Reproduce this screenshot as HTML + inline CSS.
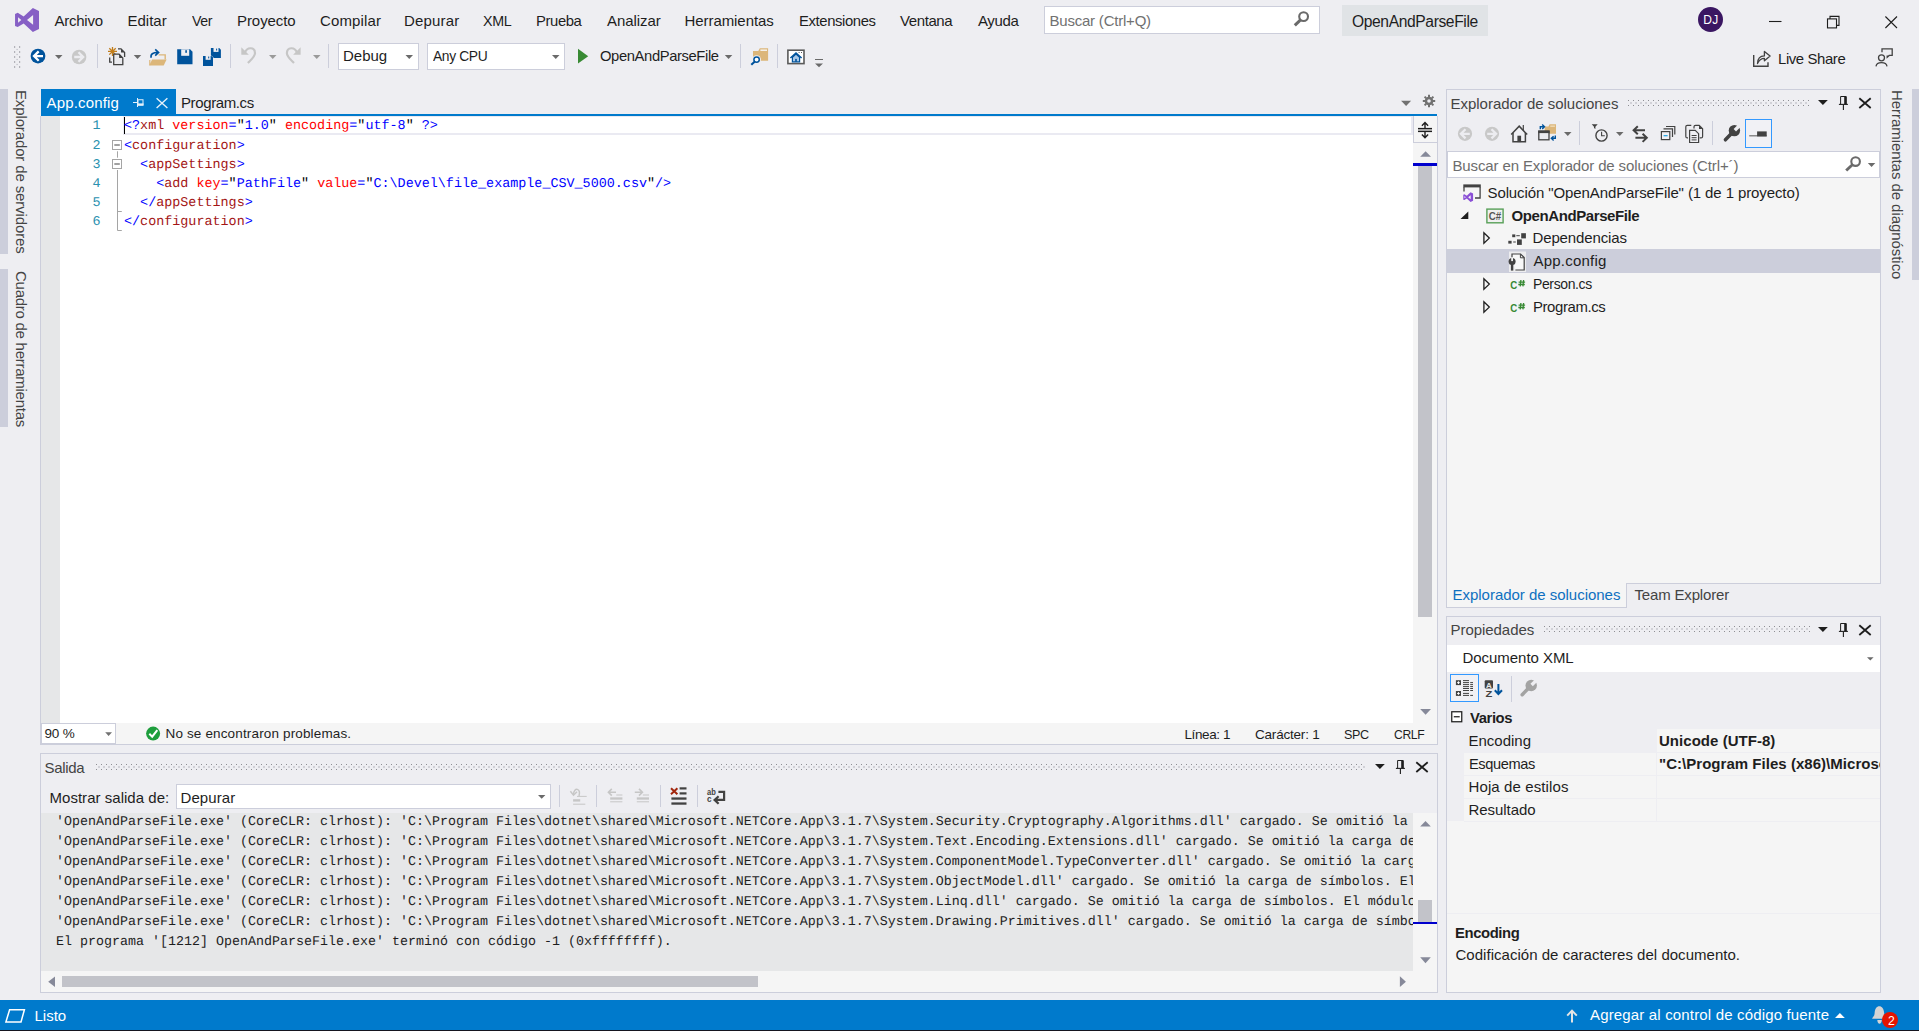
<!DOCTYPE html>
<html lang="es"><head><meta charset="utf-8"><title>OpenAndParseFile - Microsoft Visual Studio</title>
<style>
html,body{margin:0;padding:0}
body{width:1919px;height:1031px;overflow:hidden;background:#EEEEF2;position:relative;font-family:"Liberation Sans", sans-serif;color:#1E1E1E}
body div,body svg.ic{position:absolute}
.t{white-space:pre;font-family:"Liberation Sans", sans-serif}
.code{white-space:pre;font-family:"Liberation Mono", monospace;line-height:20px;text-rendering:geometricPrecision}
.ic svg{display:block;overflow:visible}
.grip{height:6px;background-image:
 radial-gradient(circle at 0.5px 0.5px,#8E8E93 0.55px,transparent 0.9px),
 radial-gradient(circle at 3px 3px,#BDBDC4 0.55px,transparent 0.9px),
 radial-gradient(circle at 0.5px 5.5px,#8E8E93 0.55px,transparent 0.9px);
 background-size:5px 6px;background-repeat:repeat-x}
</style></head>
<body>
<div class="t" style="font-size:15px;letter-spacing:-0.250px;color:#1E1E1E;line-height:20px;left:54.50px;top:10.80px;">Archivo</div>
<div class="t" style="font-size:15px;letter-spacing:0.000px;color:#1E1E1E;line-height:20px;left:127.50px;top:10.80px;">Editar</div>
<div class="t" style="font-size:15px;letter-spacing:-0.400px;color:#1E1E1E;line-height:20px;transform-origin:0 0;transform:scaleX(0.9459);left:192.00px;top:10.80px;">Ver</div>
<div class="t" style="font-size:15px;letter-spacing:-0.071px;color:#1E1E1E;line-height:20px;left:237.00px;top:10.80px;">Proyecto</div>
<div class="t" style="font-size:15px;letter-spacing:0.143px;color:#1E1E1E;line-height:20px;left:320.00px;top:10.80px;">Compilar</div>
<div class="t" style="font-size:15px;letter-spacing:0.167px;color:#1E1E1E;line-height:20px;left:404.00px;top:10.80px;">Depurar</div>
<div class="t" style="font-size:15px;letter-spacing:-0.400px;color:#1E1E1E;line-height:20px;transform-origin:0 0;transform:scaleX(0.9520);left:483.00px;top:10.80px;">XML</div>
<div class="t" style="font-size:15px;letter-spacing:-0.400px;color:#1E1E1E;line-height:20px;transform-origin:0 0;transform:scaleX(0.9891);left:536.00px;top:10.80px;">Prueba</div>
<div class="t" style="font-size:15px;letter-spacing:-0.071px;color:#1E1E1E;line-height:20px;left:607.00px;top:10.80px;">Analizar</div>
<div class="t" style="font-size:15px;letter-spacing:-0.068px;color:#1E1E1E;line-height:20px;left:684.50px;top:10.80px;">Herramientas</div>
<div class="t" style="font-size:15px;letter-spacing:-0.400px;color:#1E1E1E;line-height:20px;transform-origin:0 0;transform:scaleX(0.9903);left:798.50px;top:10.80px;">Extensiones</div>
<div class="t" style="font-size:15px;letter-spacing:-0.400px;color:#1E1E1E;line-height:20px;left:900.00px;top:10.80px;">Ventana</div>
<div class="t" style="font-size:15px;letter-spacing:-0.375px;color:#1E1E1E;line-height:20px;left:978.00px;top:10.80px;">Ayuda</div>
<div style="left:1044px;top:6px;width:276px;height:28px;background:#fff;border:1px solid #CCCEDB;box-sizing:border-box;"></div>
<div class="t" style="font-size:15px;letter-spacing:-0.214px;color:#717171;line-height:20px;left:1049.50px;top:10.80px;">Buscar (Ctrl+Q)</div>
<div style="left:1342px;top:5px;width:146px;height:31px;background:#E0E3E6;"></div>
<div class="t" style="font-size:16px;letter-spacing:-0.400px;color:#1E1E1E;line-height:20px;transform-origin:0 0;transform:scaleX(0.9767);left:1352.00px;top:11.76px;">OpenAndParseFile</div>
<div style="left:1698.2px;top:7.2px;width:25px;height:25px;background:#3A1662;border-radius:50%;"></div>
<div class="t" style="font-size:12px;letter-spacing:0.400px;color:#fff;line-height:20px;left:1703.30px;top:10.04px;">DJ</div>
<div style="left:97px;top:44px;width:1px;height:24px;background:#CCCEDB;"></div>
<div style="left:230px;top:44px;width:1px;height:24px;background:#CCCEDB;"></div>
<div style="left:328px;top:44px;width:1px;height:24px;background:#CCCEDB;"></div>
<div style="left:338px;top:43px;width:81px;height:27px;background:#fff;border:1px solid #CCCEDB;box-sizing:border-box;"></div>
<div class="t" style="font-size:15px;letter-spacing:0.000px;color:#1E1E1E;line-height:20px;left:343.00px;top:46.30px;">Debug</div>
<div style="left:427px;top:43px;width:138px;height:27px;background:#fff;border:1px solid #CCCEDB;box-sizing:border-box;"></div>
<div class="t" style="font-size:15px;letter-spacing:-0.400px;color:#1E1E1E;line-height:20px;transform-origin:0 0;transform:scaleX(0.9215);left:433.00px;top:46.30px;">Any CPU</div>
<div class="t" style="font-size:15px;letter-spacing:-0.400px;color:#1E1E1E;line-height:20px;transform-origin:0 0;transform:scaleX(0.9855);left:599.50px;top:46.30px;">OpenAndParseFile</div>
<div style="left:740px;top:44px;width:1px;height:24px;background:#CCCEDB;"></div>
<div style="left:777px;top:44px;width:1px;height:24px;background:#CCCEDB;"></div>
<div class="t" style="font-size:15px;letter-spacing:-0.400px;color:#1E1E1E;line-height:20px;transform-origin:0 0;transform:scaleX(0.9940);left:1777.70px;top:48.80px;">Live Share</div>
<div style="left:0px;top:89px;width:8px;height:165px;background:#CCCEDB;"></div>
<div style="left:0px;top:269px;width:8px;height:158px;background:#CCCEDB;"></div>
<div class="t" style="font-size:15px;letter-spacing:-0.130px;color:#444;line-height:20px;left:30.80px;top:89.50px;transform-origin:0 0;transform:rotate(90deg);">Explorador de servidores</div>
<div class="t" style="font-size:15px;letter-spacing:-0.262px;color:#444;line-height:20px;left:30.80px;top:270.50px;transform-origin:0 0;transform:rotate(90deg);">Cuadro de herramientas</div>
<div style="left:1912px;top:89px;width:7px;height:191px;background:#CCCEDB;"></div>
<div class="t" style="font-size:15px;letter-spacing:-0.058px;color:#444;line-height:20px;left:1906.80px;top:90.00px;transform-origin:0 0;transform:rotate(90deg);">Herramientas de diagnóstico</div>
<div style="left:41px;top:89px;width:135px;height:25px;background:#007ACC;"></div>
<div style="left:41px;top:114px;width:1396px;height:2px;background:#007ACC;"></div>
<div class="t" style="font-size:15px;letter-spacing:0.167px;color:#fff;line-height:20px;left:46.50px;top:92.50px;">App.config</div>
<div class="t" style="font-size:15px;letter-spacing:-0.389px;color:#1E1E1E;line-height:20px;left:181.00px;top:92.50px;">Program.cs</div>
<div style="left:40px;top:116px;width:1px;height:629px;background:#CCCEDB;"></div>
<div style="left:41px;top:116px;width:1372px;height:607px;background:#fff;"></div>
<div style="left:41px;top:116px;width:19px;height:607px;background:#E6E7E8;"></div>
<div style="left:1413px;top:116px;width:24px;height:607px;background:#F5F5F5;"></div>
<div style="left:1437px;top:116px;width:1px;height:629px;background:#CCCEDB;"></div>
<div style="left:123px;top:116px;width:1290px;height:18.5px;border:2px solid #EAEAF2;border-top-width:1.5px;box-sizing:border-box;"></div>
<div style="left:124px;top:117px;width:1px;height:17px;background:#000;"></div>
<div style="left:1413px;top:116px;width:24px;height:27px;background:#F5F5F5;border-left:1px solid #CCCEDB;border-bottom:1px solid #CCCEDB;box-sizing:border-box;"></div>
<div style="left:1413px;top:163px;width:24px;height:3px;background:#0000CD;"></div>
<div style="left:1418px;top:166px;width:14px;height:451px;background:#C2C3C9;"></div>
<svg class="ic" style="left:110px;top:138px" width="14" height="96" viewBox="0 0 14 96"><g fill="#fff" stroke="#A5A5A5" stroke-width="1"><rect x="2.5" y="2.5" width="9" height="9"/><rect x="2.5" y="21.5" width="9" height="9"/></g><g stroke="#A5A5A5" stroke-width="1" fill="none"><path d="M7.5 13.3v6.4M7.5 32v60.5h4.3M7.5 73.5h4.3"/></g><g stroke="#444" stroke-width="1.1"><path d="M4.3 7h5.5M4.3 26h5.5"/></g></svg>
<div class="code" style="left:124px;top:117.13px;font-size:13.41px"><span style="color:#0000FF">&lt;?</span><span style="color:#A31515">xml</span><span style="color:#000"> </span><span style="color:#FF0000">version</span><span style="color:#0000FF">=</span><span style="color:#000">&quot;</span><span style="color:#0000FF">1.0</span><span style="color:#000">&quot;</span><span style="color:#000"> </span><span style="color:#FF0000">encoding</span><span style="color:#0000FF">=</span><span style="color:#000">&quot;</span><span style="color:#0000FF">utf-8</span><span style="color:#000">&quot;</span><span style="color:#000"> </span><span style="color:#0000FF">?&gt;</span></div>
<div class="code" style="left:60px;width:40.5px;text-align:right;top:117.13px;font-size:13.41px;color:#2B91AF">1</div>
<div class="code" style="left:124px;top:137.13px;font-size:13.41px"><span style="color:#0000FF">&lt;</span><span style="color:#A31515">configuration</span><span style="color:#0000FF">&gt;</span></div>
<div class="code" style="left:60px;width:40.5px;text-align:right;top:137.13px;font-size:13.41px;color:#2B91AF">2</div>
<div class="code" style="left:124px;top:156.13px;font-size:13.41px"><span style="color:#000">  </span><span style="color:#0000FF">&lt;</span><span style="color:#A31515">appSettings</span><span style="color:#0000FF">&gt;</span></div>
<div class="code" style="left:60px;width:40.5px;text-align:right;top:156.13px;font-size:13.41px;color:#2B91AF">3</div>
<div class="code" style="left:124px;top:175.13px;font-size:13.41px"><span style="color:#000">    </span><span style="color:#0000FF">&lt;</span><span style="color:#A31515">add</span><span style="color:#000"> </span><span style="color:#FF0000">key</span><span style="color:#0000FF">=</span><span style="color:#000">&quot;</span><span style="color:#0000FF">PathFile</span><span style="color:#000">&quot;</span><span style="color:#000"> </span><span style="color:#FF0000">value</span><span style="color:#0000FF">=</span><span style="color:#000">&quot;</span><span style="color:#0000FF">C:\Devel\file_example_CSV_5000.csv</span><span style="color:#000">&quot;</span><span style="color:#0000FF">/&gt;</span></div>
<div class="code" style="left:60px;width:40.5px;text-align:right;top:175.13px;font-size:13.41px;color:#2B91AF">4</div>
<div class="code" style="left:124px;top:194.13px;font-size:13.41px"><span style="color:#000">  </span><span style="color:#0000FF">&lt;/</span><span style="color:#A31515">appSettings</span><span style="color:#0000FF">&gt;</span></div>
<div class="code" style="left:60px;width:40.5px;text-align:right;top:194.13px;font-size:13.41px;color:#2B91AF">5</div>
<div class="code" style="left:124px;top:213.13px;font-size:13.41px"><span style="color:#0000FF">&lt;/</span><span style="color:#A31515">configuration</span><span style="color:#0000FF">&gt;</span></div>
<div class="code" style="left:60px;width:40.5px;text-align:right;top:213.13px;font-size:13.41px;color:#2B91AF">6</div>
<div style="left:41px;top:723px;width:1396px;height:21px;background:#F5F5F5;"></div>
<div style="left:41px;top:744px;width:1397px;height:1px;background:#CCCEDB;"></div>
<div style="left:41px;top:723px;width:75px;height:21px;background:#fff;border:1px solid #CCCEDB;box-sizing:border-box;"></div>
<div class="t" style="font-size:13.5px;letter-spacing:-0.167px;color:#1E1E1E;line-height:20px;left:44.50px;top:724.32px;">90 %</div>
<div class="t" style="font-size:13.5px;letter-spacing:0.148px;color:#1E1E1E;line-height:20px;left:165.50px;top:724.32px;">No se encontraron problemas.</div>
<div class="t" style="font-size:13.5px;letter-spacing:-0.400px;color:#1E1E1E;line-height:20px;left:1184.50px;top:724.82px;">Línea: 1</div>
<div class="t" style="font-size:13.5px;letter-spacing:-0.200px;color:#1E1E1E;line-height:20px;left:1255.00px;top:724.82px;">Carácter: 1</div>
<div class="t" style="font-size:13.5px;letter-spacing:-0.400px;color:#1E1E1E;line-height:20px;transform-origin:0 0;transform:scaleX(0.9325);left:1344.00px;top:724.82px;">SPC</div>
<div class="t" style="font-size:13.5px;letter-spacing:-0.400px;color:#1E1E1E;line-height:20px;transform-origin:0 0;transform:scaleX(0.8994);left:1394.00px;top:724.82px;">CRLF</div>
<div style="left:40px;top:753px;width:1398px;height:240px;border:1px solid #CCCEDB;box-sizing:border-box;"></div>
<div class="t" style="font-size:15px;letter-spacing:-0.300px;color:#444;line-height:20px;left:44.50px;top:757.80px;">Salida</div>
<div class="grip" style="left:96px;top:764px;width:1269px"></div>
<div class="t" style="font-size:15px;letter-spacing:0.029px;color:#1E1E1E;line-height:20px;left:49.50px;top:787.80px;">Mostrar salida de:</div>
<div style="left:176px;top:784px;width:375px;height:25px;background:#fff;border:1px solid #CCCEDB;box-sizing:border-box;"></div>
<div class="t" style="font-size:15px;letter-spacing:0.083px;color:#1E1E1E;line-height:20px;left:180.50px;top:787.80px;">Depurar</div>
<div style="left:559px;top:785px;width:1px;height:22px;background:#CCCEDB;"></div>
<div style="left:596px;top:785px;width:1px;height:22px;background:#CCCEDB;"></div>
<div style="left:660px;top:785px;width:1px;height:22px;background:#CCCEDB;"></div>
<div style="left:697px;top:785px;width:1px;height:22px;background:#CCCEDB;"></div>
<div style="left:41px;top:813px;width:1372px;height:158px;background:#E6E7E8;"></div>
<div style="left:1413px;top:813px;width:24px;height:158px;background:#F5F5F5;"></div>
<div style="left:41px;top:971px;width:1396px;height:21px;background:#F5F5F5;"></div>
<div style="left:41px;top:813px;width:1372px;height:158px;overflow:hidden">
<div class="code" style="left:15px;top:0.45px;font-size:13.33px;color:#1E1E1E">&#x27;OpenAndParseFile.exe&#x27; (CoreCLR: clrhost): &#x27;C:\Program Files\dotnet\shared\Microsoft.NETCore.App\3.1.7\System.Security.Cryptography.Algorithms.dll&#x27; cargado. Se omitió la carga de símbolos. El módulo está optimizado y la opción del depurador &#x27;Solo mi código&#x27; está habilitada.</div>
<div class="code" style="left:15px;top:20.45px;font-size:13.33px;color:#1E1E1E">&#x27;OpenAndParseFile.exe&#x27; (CoreCLR: clrhost): &#x27;C:\Program Files\dotnet\shared\Microsoft.NETCore.App\3.1.7\System.Text.Encoding.Extensions.dll&#x27; cargado. Se omitió la carga de símbolos. El módulo está optimizado y la opción del depurador &#x27;Solo mi código&#x27; está habilitada.</div>
<div class="code" style="left:15px;top:40.45px;font-size:13.33px;color:#1E1E1E">&#x27;OpenAndParseFile.exe&#x27; (CoreCLR: clrhost): &#x27;C:\Program Files\dotnet\shared\Microsoft.NETCore.App\3.1.7\System.ComponentModel.TypeConverter.dll&#x27; cargado. Se omitió la carga de símbolos. El módulo está optimizado y la opción del depurador &#x27;Solo mi código&#x27; está habilitada.</div>
<div class="code" style="left:15px;top:60.45px;font-size:13.33px;color:#1E1E1E">&#x27;OpenAndParseFile.exe&#x27; (CoreCLR: clrhost): &#x27;C:\Program Files\dotnet\shared\Microsoft.NETCore.App\3.1.7\System.ObjectModel.dll&#x27; cargado. Se omitió la carga de símbolos. El módulo está optimizado y la opción del depurador &#x27;Solo mi código&#x27; está habilitada.</div>
<div class="code" style="left:15px;top:80.45px;font-size:13.33px;color:#1E1E1E">&#x27;OpenAndParseFile.exe&#x27; (CoreCLR: clrhost): &#x27;C:\Program Files\dotnet\shared\Microsoft.NETCore.App\3.1.7\System.Linq.dll&#x27; cargado. Se omitió la carga de símbolos. El módulo está optimizado y la opción del depurador &#x27;Solo mi código&#x27; está habilitada.</div>
<div class="code" style="left:15px;top:100.45px;font-size:13.33px;color:#1E1E1E">&#x27;OpenAndParseFile.exe&#x27; (CoreCLR: clrhost): &#x27;C:\Program Files\dotnet\shared\Microsoft.NETCore.App\3.1.7\System.Drawing.Primitives.dll&#x27; cargado. Se omitió la carga de símbolos. El módulo está optimizado y la opción del depurador &#x27;Solo mi código&#x27; está habilitada.</div>
<div class="code" style="left:15px;top:120.45px;font-size:13.33px;color:#1E1E1E">El programa &#x27;[1212] OpenAndParseFile.exe&#x27; terminó con código -1 (0xffffffff).</div>
</div>
<div style="left:1418px;top:900px;width:14px;height:21.5px;background:#C2C3C9;"></div>
<div style="left:1413px;top:921.5px;width:24px;height:2.6px;background:#0000CD;"></div>
<div style="left:62px;top:976px;width:696px;height:11px;background:#C2C3C9;"></div>
<div style="left:1446px;top:89px;width:435px;height:495px;border:1px solid #CCCEDB;box-sizing:border-box;"></div>
<div class="t" style="font-size:15px;letter-spacing:-0.022px;color:#444;line-height:20px;left:1450.50px;top:93.80px;">Explorador de soluciones</div>
<div class="grip" style="left:1628px;top:100px;width:181px"></div>
<div style="left:1579px;top:121px;width:1px;height:24px;background:#CCCEDB;"></div>
<div style="left:1712px;top:121px;width:1px;height:24px;background:#CCCEDB;"></div>
<div style="left:1745px;top:119px;width:27px;height:29px;background:#F1F1F5;border:1px solid #3399FF;box-sizing:border-box;"></div>
<div style="left:1447px;top:151px;width:433px;height:27px;background:#fff;border:1px solid #CCCEDB;box-sizing:border-box;"></div>
<div class="t" style="font-size:15px;letter-spacing:-0.131px;color:#6D6D6D;line-height:20px;left:1452.50px;top:155.80px;">Buscar en Explorador de soluciones (Ctrl+´)</div>
<div style="left:1447px;top:178px;width:433px;height:405px;background:#F5F5F5;"></div>
<div style="left:1447px;top:249px;width:433px;height:24px;background:#CCCEDB;"></div>
<div class="t" style="font-size:15px;letter-spacing:-0.102px;color:#1E1E1E;line-height:20px;left:1487.50px;top:182.80px;">Solución &quot;OpenAndParseFile&quot; (1 de 1 proyecto)</div>
<div class="t" style="font-size:15px;letter-spacing:-0.400px;color:#1E1E1E;line-height:20px;font-weight:700;left:1511.50px;top:206.00px;">OpenAndParseFile</div>
<div class="t" style="font-size:15px;letter-spacing:-0.136px;color:#1E1E1E;line-height:20px;left:1532.50px;top:228.30px;">Dependencias</div>
<div class="t" style="font-size:15px;letter-spacing:0.222px;color:#1E1E1E;line-height:20px;left:1533.50px;top:251.30px;">App.config</div>
<div class="t" style="font-size:15px;letter-spacing:-0.400px;color:#1E1E1E;line-height:20px;transform-origin:0 0;transform:scaleX(0.9315);left:1532.50px;top:274.30px;">Person.cs</div>
<div class="t" style="font-size:15px;letter-spacing:-0.400px;color:#1E1E1E;line-height:20px;transform-origin:0 0;transform:scaleX(0.9945);left:1532.50px;top:297.30px;">Program.cs</div>
<div style="left:1446px;top:583px;width:181px;height:25px;background:#F5F5F5;border:1px solid #CCCEDB;border-top:none;box-sizing:border-box;"></div>
<div class="t" style="font-size:15px;letter-spacing:-0.022px;color:#0E70C0;line-height:20px;left:1452.50px;top:585.30px;">Explorador de soluciones</div>
<div class="t" style="font-size:15px;letter-spacing:-0.167px;color:#444;line-height:20px;left:1634.50px;top:585.30px;">Team Explorer</div>
<div style="left:1446px;top:616px;width:435px;height:377px;background:#F5F5F5;border:1px solid #CCCEDB;box-sizing:border-box;"></div>
<div style="left:1447px;top:617px;width:433px;height:28px;background:#EEEEF2;"></div>
<div class="t" style="font-size:15px;letter-spacing:-0.050px;color:#444;line-height:20px;left:1450.50px;top:619.80px;">Propiedades</div>
<div class="grip" style="left:1544px;top:626px;width:266px"></div>
<div style="left:1447px;top:645px;width:433px;height:27px;background:#fff;"></div>
<div class="t" style="font-size:15px;letter-spacing:-0.042px;color:#1E1E1E;line-height:20px;left:1462.50px;top:648.30px;">Documento XML</div>
<div style="left:1447px;top:672px;width:433px;height:34px;background:#EEEEF2;"></div>
<div style="left:1450px;top:674px;width:29px;height:28px;background:#F1F1F5;border:1px solid #3399FF;box-sizing:border-box;"></div>
<div style="left:1511px;top:676px;width:1px;height:26px;background:#CCCEDB;"></div>
<div style="left:1447px;top:706px;width:433px;height:23px;background:#EEEEF2;"></div>
<div style="left:1447px;top:729px;width:17px;height:92px;background:#EEEEF2;"></div>
<div style="left:1464px;top:729px;width:192px;height:23px;background:#EEEEF2;"></div>
<div style="left:1464px;top:752px;width:416px;height:1px;background:#EEEEF2;"></div>
<div style="left:1464px;top:775px;width:416px;height:1px;background:#EEEEF2;"></div>
<div style="left:1464px;top:798px;width:416px;height:1px;background:#EEEEF2;"></div>
<div style="left:1464px;top:821px;width:416px;height:1px;background:#EEEEF2;"></div>
<div style="left:1656px;top:729px;width:1px;height:92px;background:#EEEEF2;"></div>
<svg class="ic" style="left:1451px;top:711px" width="12" height="12"><rect x="0.75" y="0.75" width="10" height="10" fill="#fff" stroke="#1E1E1E" stroke-width="1.25"/><path d="M2.8 5.75h5.9" stroke="#1E1E1E" stroke-width="1.25"/></svg>
<div class="t" style="font-size:15px;letter-spacing:-0.400px;color:#1E1E1E;line-height:20px;font-weight:700;transform-origin:0 0;transform:scaleX(0.9884);left:1469.50px;top:707.80px;">Varios</div>
<div class="t" style="font-size:15px;letter-spacing:0.000px;color:#1E1E1E;line-height:20px;left:1468.50px;top:730.80px;">Encoding</div>
<div class="t" style="font-size:15px;letter-spacing:0.036px;color:#1E1E1E;line-height:20px;font-weight:700;left:1659.00px;top:730.80px;">Unicode (UTF-8)</div>
<div class="t" style="font-size:15px;letter-spacing:-0.400px;color:#1E1E1E;line-height:20px;transform-origin:0 0;transform:scaleX(0.9747);left:1468.50px;top:753.80px;">Esquemas</div>
<div class="t" style="font-size:15px;letter-spacing:0.034px;color:#1E1E1E;line-height:20px;font-weight:700;left:1659.00px;top:753.80px;width:221.00px;overflow:hidden;">&quot;C:\Program Files (x86)\Microsoft Visual Studio\2019\Community\xml\Schemas\DotNetConfig.xsd&quot;</div>
<div class="t" style="font-size:15px;letter-spacing:0.107px;color:#1E1E1E;line-height:20px;left:1468.50px;top:776.80px;">Hoja de estilos</div>
<div class="t" style="font-size:15px;letter-spacing:-0.062px;color:#1E1E1E;line-height:20px;left:1468.50px;top:799.80px;">Resultado</div>
<div style="left:1447px;top:913px;width:433px;height:1px;background:#EEEEF2;"></div>
<div class="t" style="font-size:15px;letter-spacing:-0.400px;color:#1E1E1E;line-height:20px;font-weight:700;transform-origin:0 0;transform:scaleX(0.9891);left:1454.50px;top:923.30px;">Encoding</div>
<div class="t" style="font-size:15px;letter-spacing:0.025px;color:#1E1E1E;line-height:20px;left:1455.50px;top:945.30px;">Codificación de caracteres del documento.</div>
<div style="left:0px;top:1000px;width:1919px;height:30px;background:#007ACC;"></div>
<div style="left:0px;top:1030px;width:1919px;height:1px;background:#15151F;"></div>
<div class="t" style="font-size:15px;letter-spacing:0.000px;color:#fff;line-height:20px;left:34.50px;top:1005.80px;">Listo</div>
<div class="t" style="font-size:15px;letter-spacing:0.162px;color:#fff;line-height:20px;left:1590.00px;top:1005.30px;">Agregar al control de código fuente</div>
<svg class="ic" style="left:0;top:0" width="1919" height="1031" viewBox="0 0 1919 1031"><path transform="translate(14.9 7.9)" fill="#865FC5" fill-rule="evenodd" d="M17.95 0L24.1 3.1V21L17.95 24.1L8.76 15.65L2.8 19.2L.15 18.2V6L2.8 4.9L8.76 8.5ZM18.2 7.2L12.1 12.06L18.2 16.9ZM3.16 9.3L6.4 12.06L3.16 14.8Z"/>
<rect x="14" y="46.4" width="1.2" height="1.2" fill="#8C8C94"/><rect x="19" y="46.4" width="1.2" height="1.2" fill="#8C8C94"/><rect x="14" y="51.4" width="1.2" height="1.2" fill="#8C8C94"/><rect x="19" y="51.4" width="1.2" height="1.2" fill="#8C8C94"/><rect x="14" y="56.4" width="1.2" height="1.2" fill="#8C8C94"/><rect x="19" y="56.4" width="1.2" height="1.2" fill="#8C8C94"/><rect x="14" y="61.4" width="1.2" height="1.2" fill="#8C8C94"/><rect x="19" y="61.4" width="1.2" height="1.2" fill="#8C8C94"/><rect x="14" y="66.4" width="1.2" height="1.2" fill="#8C8C94"/><rect x="19" y="66.4" width="1.2" height="1.2" fill="#8C8C94"/><rect x="16.5" y="48.9" width="1.2" height="1.2" fill="#BDBDC6"/><rect x="16.5" y="53.9" width="1.2" height="1.2" fill="#BDBDC6"/><rect x="16.5" y="58.9" width="1.2" height="1.2" fill="#BDBDC6"/><rect x="16.5" y="63.9" width="1.2" height="1.2" fill="#BDBDC6"/>
<circle cx="38" cy="56.1" r="7.4" fill="#00539C"/><path d="M43 56.1H34.6M38.7 51.4L34 56.1L38.7 60.8" fill="none" stroke="#fff" stroke-width="2.3"/>
<path fill="#6A6A6A" d="M55 55h7.5l-3.75 4z"/>
<circle cx="79.1" cy="57" r="7.3" fill="#C8C8C8"/><path d="M74.2 57H82.6M78.5 52.3L83.2 57L78.5 61.7" fill="none" stroke="#ECECF0" stroke-width="2.3"/>
<g stroke="#C27D1A" stroke-width="1.3"><path d="M112.5 46.9v9M108 51.4h9M109.3 48.2l6.4 6.4M115.7 48.2l-6.4 6.4"/></g>
<g fill="none" stroke="#424242" stroke-width="1.3"><path d="M118 48.8h3l3.6 3.6v4.6"/><path d="M109.7 57.5v4.6h2.3"/><path d="M113.7 54.2h5.4l3.7 3.7v6.7h-9.1z" fill="#E9E9ED"/></g><path d="M121 48.8v3.6h3.6z" fill="#424242"/><path d="M119.1 54.2v3.7h3.7z" fill="#424242"/>
<path fill="#6A6A6A" d="M133.75 55h7.5l-3.75 4z"/>
<path d="M158.6 54.9h6.6v4.6" fill="none" stroke="#DCB67A" stroke-width="1.4"/><path d="M149.2 65.5l2.9-6h14.5l-2.9 6z" fill="#DCB67A"/><path d="M149.8 65.3V60" stroke="#DCB67A" stroke-width="1.2"/>
<path d="M151.2 57.8C150.2 54.2 153 52.4 157.8 52.4M155.2 49.3L158.6 52.4L155.2 55.6" fill="none" stroke="#00539C" stroke-width="1.6"/>
<path d="M177.2 49.3H190.1L192.5 51.7V64.3H177.2Z" fill="#00539C"/><rect x="181.2" y="49.3" width="8" height="6.5" fill="#EEEEF2"/><rect x="185.3" y="50.2" width="1.6" height="2.6" fill="#00539C"/>
<g transform="translate(210.9 48)"><path d="M0 0H8.3L10 1.7V10H0Z" fill="#00539C" stroke="#EEEEF2" stroke-width="1" paint-order="stroke"/><rect x="2.6" y="0" width="5" height="3.9" fill="#EEEEF2"/><rect x="5.2" y=".6" width="1" height="1.9" fill="#00539C"/></g><g transform="translate(203 55.9)"><path d="M0 0H8.3L10 1.7V10H0Z" fill="#00539C" stroke="#EEEEF2" stroke-width="1" paint-order="stroke"/><rect x="2.6" y="0" width="5" height="3.9" fill="#EEEEF2"/><rect x="5.2" y=".6" width="1" height="1.9" fill="#00539C"/></g>
<path d="M244.8 53C247 46.3 255 47 255 53.2C255 56.6 251.2 59.6 247.9 63" fill="none" stroke="#C6C6C6" stroke-width="2.2"/><path d="M241.3 47.2V54.7H248.8Z" fill="#C6C6C6"/>
<g transform="translate(541.9 0) scale(-1 1)"><path d="M244.8 53C247 46.3 255 47 255 53.2C255 56.6 251.2 59.6 247.9 63" fill="none" stroke="#C6C6C6" stroke-width="2.2"/><path d="M241.3 47.2V54.7H248.8Z" fill="#C6C6C6"/></g>
<path fill="#9A9A9A" d="M269 55h7.5l-3.75 4z"/>
<path fill="#9A9A9A" d="M313 55h7.5l-3.75 4z"/>
<path fill="#6A6A6A" d="M405.5 55h7.5l-3.75 4z"/>
<path fill="#6A6A6A" d="M552 55h7.5l-3.75 4z"/>
<path d="M578 48.8L588.2 56.2L578 63.6Z" fill="#388A34"/>
<path fill="#6A6A6A" d="M724.8 55h7.5l-3.75 4z"/>
<path d="M753 51H758.3L759.8 48.2H768.1V60.8H753Z" fill="#DCB67A"/><rect x="760.4" y="49.5" width="6.6" height="1.4" fill="#F7F7F7"/>
<circle cx="756.6" cy="59.6" r="4.4" fill="#EEEEF2"/><path d="M754.3 61.9L751.5 64.5" stroke="#EEEEF2" stroke-width="4"/><circle cx="756.6" cy="59.6" r="2.7" fill="#fff" stroke="#00539C" stroke-width="1.5"/><path d="M754.6 61.7L751.3 64.7" stroke="#00539C" stroke-width="2.1"/>
<rect x="787.9" y="50.2" width="16.1" height="13.4" fill="#fff" stroke="#5A5A5A" stroke-width="1.6"/><path d="M792.4 57.2L796 54L799.6 57.2V61.8H792.4Z" fill="#A9C8E8" stroke="#00539C" stroke-width="1.2"/><path d="M790.4 58L796 53L801.6 58" fill="none" stroke="#00539C" stroke-width="1.5"/><rect x="795.2" y="58.9" width="1.6" height="2.9" fill="#00539C"/><rect x="798.6" y="52" width="1" height="1" fill="#5A5A5A"/><rect x="801" y="52" width="1" height="1" fill="#5A5A5A"/>
<rect x="815" y="59" width="8" height="1" fill="#6A6A6A"/><path d="M815 63.4h8l-4 3.8z" fill="#6A6A6A"/>
<circle cx="1303.6" cy="16.6" r="4.4" fill="none" stroke="#6A6A6A" stroke-width="2.1"/><path d="M1300.8 19.6L1294.8 25.3" stroke="#6A6A6A" stroke-width="3"/>
<g fill="none" stroke="#1E1E1E" stroke-width="1.1"><path d="M1769 21.5h12.5"/><rect x="1827.5" y="18.9" width="9" height="9"/><path d="M1830 18.9v-2.5h9v9h-2.5"/><path d="M1885.4 16.5l11.6 11.5M1897 16.5l-11.6 11.5"/></g>
<g fill="none" stroke="#424242" stroke-width="1.4"><path d="M1753.7 55V66.2H1768V62.2"/><path d="M1757.5 63.6C1757.6 58.4 1760.6 56 1764.4 55.9V51.4L1770.1 56.1L1764.4 60.8V58.3C1761.2 58.3 1759 60 1757.5 63.6Z" stroke-width="1.3" stroke-linejoin="round"/></g>
<g fill="none" stroke="#424242" stroke-width="1.3"><circle cx="1881.5" cy="57.8" r="3"/><path d="M1876 66.3C1876.6 61.4 1886.4 61.4 1887 66.3"/><path d="M1882 52.2V48.9H1892.2V55.4H1889.2L1887.2 57.2V55.4"/></g>
<g stroke="#E4F0FA" fill="none"><path d="M133 102.5h4.5M137.5 98v9" stroke-width="1"/><rect x="138" y="99.75" width="5" height="5.5" stroke-width="1"/><path d="M138 104.4h5.5" stroke-width="2"/><path d="M156.6 98.3l10.8 9.6M167.4 98.3l-10.8 9.6" stroke-width="1.4"/></g>
<path d="M1401.1 100.8h10l-5 5.2z" fill="#717171"/>
<circle cx="1429" cy="101" r="3.05" fill="none" stroke="#717171" stroke-width="2.5"/><path d="M1433.00 101.00L1435.20 101.00" stroke="#717171" stroke-width="2"/><path d="M1431.83 103.83L1433.38 105.38" stroke="#717171" stroke-width="2"/><path d="M1429.00 105.00L1429.00 107.20" stroke="#717171" stroke-width="2"/><path d="M1426.17 103.83L1424.62 105.38" stroke="#717171" stroke-width="2"/><path d="M1425.00 101.00L1422.80 101.00" stroke="#717171" stroke-width="2"/><path d="M1426.17 98.17L1424.62 96.62" stroke="#717171" stroke-width="2"/><path d="M1429.00 97.00L1429.00 94.80" stroke="#717171" stroke-width="2"/><path d="M1431.83 98.17L1433.38 96.62" stroke="#717171" stroke-width="2"/>
<rect x="1418" y="129" width="14" height="2.2" fill="#B4B4B4"/><rect x="1418" y="127.9" width="14" height="1.2" fill="#1E1E1E"/><rect x="1418" y="130.9" width="14" height="1.2" fill="#1E1E1E"/><g fill="none" stroke="#1E1E1E" stroke-width="1.4"><path d="M1425 122.9V128M1421.9 125.7L1425 122.5L1428.1 125.7M1425 132V137.3M1421.9 134.5L1425 137.7L1428.1 134.5"/></g>
<path d="M1420.2 156.8h10.8l-5.4-5.6z" fill="#868999"/><path d="M1420.2 709h10.8l-5.4 5.8z" fill="#868999"/>
<path d="M1420.2 826.6h10.6l-5.3-5.7z" fill="#868999"/><path d="M1420.2 957.2h10.6l-5.3 6z" fill="#868999"/>
<path d="M55 976.4v10.6l-6.8-5.3z" fill="#868999"/><path d="M1399.9 976.3v10.8l6-5.4z" fill="#868999"/>
<path fill="#717171" d="M105.2 732.3h6.8l-3.4 3.6z"/>
<circle cx="153.1" cy="733.6" r="7" fill="#1E9E3C"/><path d="M149.3 733.8L152.2 736.7L157.3 730.2" fill="none" stroke="#fff" stroke-width="2"/>
<g transform="translate(0 0)"><path d="M1818 100.1h9.8l-4.9 4.9z" fill="#1E1E1E"/><g stroke="#1E1E1E" fill="none"><path d="M1840.6 104V96.5h5.5V104" stroke-width="1"/><path d="M1845.4 96.5V104" stroke-width="2.4"/><path d="M1838.9 104.4h9" stroke-width="1.1"/><path d="M1843.4 105v5" stroke-width="1.1"/><path d="M1859.3 98.2l11.4 9.8M1870.7 98.2l-11.4 9.8" stroke-width="1.8"/></g></g>
<g transform="translate(0 527)"><path d="M1818 100.1h9.8l-4.9 4.9z" fill="#1E1E1E"/><g stroke="#1E1E1E" fill="none"><path d="M1840.6 104V96.5h5.5V104" stroke-width="1"/><path d="M1845.4 96.5V104" stroke-width="2.4"/><path d="M1838.9 104.4h9" stroke-width="1.1"/><path d="M1843.4 105v5" stroke-width="1.1"/><path d="M1859.3 98.2l11.4 9.8M1870.7 98.2l-11.4 9.8" stroke-width="1.8"/></g></g>
<g transform="translate(-443 664)"><path d="M1818 100.1h9.8l-4.9 4.9z" fill="#1E1E1E"/><g stroke="#1E1E1E" fill="none"><path d="M1840.6 104V96.5h5.5V104" stroke-width="1"/><path d="M1845.4 96.5V104" stroke-width="2.4"/><path d="M1838.9 104.4h9" stroke-width="1.1"/><path d="M1843.4 105v5" stroke-width="1.1"/><path d="M1859.3 98.2l11.4 9.8M1870.7 98.2l-11.4 9.8" stroke-width="1.8"/></g></g>
<path fill="#6A6A6A" d="M538 795h7.4l-3.7 3.8z"/>
<g fill="none" stroke="#C6C6C6"><path d="M579 796C581 788.5 574.3 786.3 573.4 794.5" stroke-width="1.5"/><path d="M570.4 791.3L573.5 795.2L577 791.8" stroke-width="1.5"/><path d="M577 796.4h9.7M573.1 804.2h12.2" stroke-width="1"/><path d="M573.1 800.4h7.1" stroke-width="2.4"/></g>
<g transform="translate(0 0)" fill="none" stroke="#C6C6C6"><path d="M616 792.2H608.6M611.8 788.9L608.4 792.2L611.8 795.6" stroke-width="1.6"/><path d="M616.3 795h6.1M610.2 801.8h12.2" stroke-width="1"/><path d="M610.2 798.5h12.2" stroke-width="2.3"/></g>
<g transform="translate(26.6 0)" fill="none" stroke="#C6C6C6"><path d="M608.2 792.2H615.6M612.4 788.9L615.8 792.2L612.4 795.6" stroke-width="1.6"/><path d="M616.3 795h6.1M610.2 801.8h12.2" stroke-width="1"/><path d="M610.2 798.5h12.2" stroke-width="2.3"/></g>
<path d="M671 788.3l6.4 6M677.4 788.3l-6.4 6" stroke="#A1260D" stroke-width="2" fill="none"/><g fill="#424242"><rect x="679.6" y="787.3" width="6.9" height="2.2"/><rect x="679.6" y="792.3" width="6.9" height="2.2"/><rect x="671.4" y="797.4" width="15.1" height="2.3"/><rect x="671.4" y="802.4" width="15.1" height="2.3"/></g>
<path d="M718.4 791.8h5.7v8.1h-8.6M718.6 796.2L714.6 799.9L718.6 803.7" fill="none" stroke="#424242" stroke-width="2.2"/>
<text x="707" y="794.6" font-family="Liberation Sans, sans-serif" font-size="8.2" font-weight="700" fill="#424242" textLength="8.8" lengthAdjust="spacingAndGlyphs">ab</text><text x="707" y="802.2" font-family="Liberation Sans, sans-serif" font-size="8.2" font-weight="700" fill="#424242">c</text>
<circle cx="1465" cy="133.8" r="7.1" fill="#C8C8C8"/><path d="M1469.8 133.8H1461.4M1465.5 129.2L1460.9 133.8L1465.5 138.4" fill="none" stroke="#ECECF0" stroke-width="2.3"/>
<circle cx="1492" cy="133.8" r="7.1" fill="#C8C8C8"/><path d="M1487.2 133.8H1495.6M1491.5 129.2L1496.1 133.8L1491.5 138.4" fill="none" stroke="#ECECF0" stroke-width="2.3"/>
<path d="M1513 134V141.7H1525.4V134L1519.2 127.6Z" fill="#F0F0F4"/><g fill="none" stroke="#424242" stroke-width="1.5"><path d="M1511.2 134.6L1519.2 126.2L1527.2 134.6"/><path d="M1513 133V141.7H1525.4V133"/><path d="M1523.3 125V130" stroke-width="1.2"/></g><rect x="1517.4" y="135.7" width="3.7" height="6.4" fill="#424242"/>
<path d="M1544.7 126.5H1548.4L1549.6 124.3H1556V133.8H1544.7Z" fill="#DCB67A"/><rect x="1550.3" y="125.6" width="4.6" height="1.1" fill="#F5E6C8"/><rect x="1538.8" y="131.2" width="10.2" height="8.6" fill="#EBEBF0" stroke="#424242" stroke-width="1.3"/><rect x="1538.2" y="130.5" width="11.4" height="2.6" fill="#424242"/><path d="M1540.3 129.2V126.8H1543.6M1542.2 124.6L1544.5 126.8L1542.2 129" fill="none" stroke="#00539C" stroke-width="1.4"/><path d="M1555.3 135.4V138.3H1552M1553.6 136.2L1551.3 138.3L1553.6 140.5" fill="none" stroke="#00539C" stroke-width="1.4"/>
<path fill="#6A6A6A" d="M1564 132.1h7.5l-3.75 4z"/>
<path d="M1591.7 124.3h6l-2.3 2.4v2.3l-1.4-.9v-1.4z" fill="#424242"/><circle cx="1601.5" cy="135.5" r="5.6" fill="none" stroke="#424242" stroke-width="1.4"/><path d="M1601.6 131.8V135.8H1604.8" fill="none" stroke="#424242" stroke-width="1.1"/>
<path fill="#6A6A6A" d="M1616 132.1h7.5l-3.75 4z"/>
<g fill="none" stroke="#424242" stroke-width="2"><path d="M1645 130.2H1634.3M1637.8 126.2L1633.6 130.2L1637.8 134.3"/><path d="M1635.4 137.8H1646M1642.6 133.8L1646.8 137.8L1642.6 141.9"/></g>
<g fill="none" stroke="#424242" stroke-width="1.2"><path d="M1666 126.5h8.8v8M1663.5 128.9h9v8.1"/><rect x="1661.4" y="131.6" width="8.4" height="8" fill="#F0F0F4"/></g><rect x="1663.6" y="135.1" width="4" height="1.2" fill="#1BA1E2"/>
<g fill="none" stroke="#424242" stroke-width="1.2"><path d="M1691.3 125.3H1687.3Q1685.8 125.3 1685.8 126.8V136.4Q1685.8 137.9 1687.3 137.9H1688"/><path d="M1694 128.5V126.8Q1694 125.3 1695.5 125.3H1699.2L1702.6 128.7V136.4Q1702.6 137.9 1701.1 137.9H1699.6"/><path d="M1689.6 130.3h5.6l3.4 3.4v8.8h-9z" fill="#F0F0F4"/><path d="M1691.6 135.5h5M1691.6 137.7h5M1691.6 139.9h5" stroke-width="1"/></g><path d="M1699 125.3v3.6h3.6z" fill="#424242"/>
<g transform="translate(1734.4 130.6)"><path d="M-2.2 2.2L-9 9.2" stroke="#424242" stroke-width="3.5" stroke-linecap="round"/><circle r="5.7" fill="#424242"/><rect x="-1.7" y="-8" width="3.4" height="7.4" fill="#EEEEF2" transform="rotate(45)"/></g>
<rect x="1749.2" y="135.2" width="17.5" height="1.2" fill="#717171"/><rect x="1757.1" y="131.4" width="9.6" height="5" fill="#424242"/>
<circle cx="1855.6" cy="161.6" r="4.3" fill="none" stroke="#6A6A6A" stroke-width="2.1"/><path d="M1852.9 164.3L1846.2 170.5" stroke="#6A6A6A" stroke-width="2.9"/>
<path fill="#6A6A6A" d="M1867.8 163.1h7.5l-3.75 3.8z"/>
<g fill="none" stroke="#424242" stroke-width="1.3"><path d="M1464 187V191.5M1480.1 187V198H1475"/></g><rect x="1463.3" y="184.4" width="17.5" height="3" fill="#424242"/><path transform="translate(1463.2 192.2) scale(.41)" fill="#8A4FD6" fill-rule="evenodd" d="M17.95 0L24.1 3.1V21L17.95 24.1L8.76 15.65L2.8 19.2L.15 18.2V6L2.8 4.9L8.76 8.5ZM18.2 7.2L12.1 12.06L18.2 16.9ZM3.16 9.3L6.4 12.06L3.16 14.8Z"/>
<path d="M1460.5 219h7.8v-7.6z" fill="#1E1E1E"/>
<rect x="1486.9" y="209.1" width="16.2" height="13.7" fill="#F0F0F0" stroke="#58A058" stroke-width="1.4"/><text x="1488.8" y="220" font-family="Liberation Sans, sans-serif" font-size="10.6" font-weight="700" fill="#555" textLength="12.4" lengthAdjust="spacingAndGlyphs">C#</text>
<path d="M1483.9 232.9v10.4l5.4-5.2z" fill="none" stroke="#1E1E1E" stroke-width="1.3"/>
<path d="M1483.9 278.9v10.4l5.4-5.2z" fill="none" stroke="#1E1E1E" stroke-width="1.3"/>
<path d="M1483.9 301.9v10.4l5.4-5.2z" fill="none" stroke="#1E1E1E" stroke-width="1.3"/>
<g fill="#424242"><rect x="1521.2" y="233.2" width="4.7" height="5.2"/><rect x="1517" y="239.4" width="4.8" height="5.5"/><rect x="1512.2" y="234.4" width="3.1" height="2.8"/><rect x="1508.3" y="240.8" width="3.3" height="2.8"/><rect x="1516.3" y="235.2" width="3.5" height="1"/><rect x="1513.2" y="241.5" width="2.6" height="1"/></g>
<rect x="1509" y="251.5" width="17" height="20.5" fill="#F2F2F2" opacity=".85"/><path d="M1512 257.6V254H1520.6L1524.2 257.6V270H1515.4" fill="#F8F8F8" stroke="#424242" stroke-width="1.2"/><path d="M1520.4 254.2V257.8H1524" fill="none" stroke="#424242" stroke-width="1"/><circle cx="1512.1" cy="261.6" r="3.5" fill="#424242"/><rect x="1511.2" y="257.5" width="1.8" height="3.6" fill="#F2F2F2"/><path d="M1512.1 263V270.6" stroke="#424242" stroke-width="2.4"/>
<text x="1510.3" y="288.9" font-family="Liberation Sans, sans-serif" font-size="11.6" font-weight="700" fill="#388A34" textLength="7" lengthAdjust="spacingAndGlyphs">C</text><path transform="translate(0 0.0)" d="M1520.9 280l-.7 6.4M1523.6 280l-.7 6.4M1518.6 282.1h6.5M1518.3 284.5h6.5" stroke="#388A34" stroke-width="1.35" fill="none"/>
<text x="1510.3" y="311.9" font-family="Liberation Sans, sans-serif" font-size="11.6" font-weight="700" fill="#388A34" textLength="7" lengthAdjust="spacingAndGlyphs">C</text><path transform="translate(0 23.0)" d="M1520.9 280l-.7 6.4M1523.6 280l-.7 6.4M1518.6 282.1h6.5M1518.3 284.5h6.5" stroke="#388A34" stroke-width="1.35" fill="none"/>
<path fill="#6A6A6A" d="M1867 657.2h6.6l-3.3 3.4z"/>
<rect x="1455.9" y="680.2" width="5.1" height="4.9" fill="#424242"/><path d="M1458.45 681.3000000000001v2.7M1457.1 682.6500000000001h2.7" stroke="#fff" stroke-width="1"/><rect x="1455.9" y="691" width="5.1" height="4.9" fill="#424242"/><path d="M1458.45 692.1v2.7M1457.1 693.45h2.7" stroke="#fff" stroke-width="1"/><rect x="1463" y="680.1" width="6" height="1" fill="#424242"/><rect x="1463" y="682.1" width="6" height="1" fill="#424242"/><rect x="1463" y="684.1" width="6" height="1" fill="#424242"/><rect x="1463" y="686.1" width="6" height="1" fill="#424242"/><rect x="1463" y="688.0" width="6" height="1" fill="#424242"/><rect x="1463" y="690.0" width="6" height="1" fill="#424242"/><rect x="1463" y="692.9" width="6" height="1" fill="#424242"/><rect x="1463" y="694.9" width="6" height="1" fill="#424242"/><rect x="1470.2" y="682.1" width="2.8" height="1" fill="#424242"/><rect x="1470.2" y="684.1" width="2.8" height="1" fill="#424242"/><rect x="1470.2" y="686.1" width="2.8" height="1" fill="#424242"/><rect x="1470.2" y="688.0" width="2.8" height="1" fill="#424242"/><rect x="1470.2" y="690.0" width="2.8" height="1" fill="#424242"/><rect x="1470.2" y="694.9" width="2.8" height="1" fill="#424242"/>
<rect x="1484.7" y="680.2" width="8.3" height="8.4" rx="1" fill="#424242"/><text x="1486" y="687.6" font-family="Liberation Sans, sans-serif" font-size="8" font-weight="700" fill="#E8E8E8">A</text><text x="1485.6" y="697.1" font-family="Liberation Sans, sans-serif" font-size="9" font-weight="700" fill="#424242" textLength="6.8" lengthAdjust="spacingAndGlyphs">Z</text><path d="M1498.4 684V693.6M1494.8 690.3L1498.4 694L1502 690.3" fill="none" stroke="#00539C" stroke-width="2"/>
<g transform="translate(1531.2 685.5)"><path d="M-2.2 2.2L-9 9.2" stroke="#A3A3A3" stroke-width="3.5" stroke-linecap="round"/><circle r="5.7" fill="#A3A3A3"/><rect x="-1.7" y="-8" width="3.4" height="7.4" fill="#EEEEF2" transform="rotate(45)"/></g>
<path d="M9.6 1009.7H24.4L21 1022H5.9Z" fill="none" stroke="#fff" stroke-width="1.5"/>
<path d="M1572 1022.6V1011M1567.2 1015.6L1572 1010.6L1576.8 1015.6" fill="none" stroke="#E4E4E4" stroke-width="2"/>
<path d="M1835 1018h9.8l-4.9-4.9z" fill="#fff"/>
<path d="M1872.2 1018.7C1872.2 1017.2 1874.4 1016.6 1874.6 1013.5C1874.8 1008.7 1876.8 1006.3 1879.3 1006.3C1881.8 1006.3 1883.9 1008.7 1884.2 1013.5C1884.4 1016.6 1885.8 1017.2 1885.8 1018.7Z" fill="#D4D4D4"/><path d="M1877.3 1020H1881.8C1881.8 1022.2 1880.6 1023.8 1879.5 1023.8C1878.4 1023.8 1877.3 1022.2 1877.3 1020Z" fill="#D4D4D4"/></svg>
<div style="left:1882px;top:1012px;width:16px;height:16px;background:#E51400;border-radius:50%;"></div>
<div class="t" style="font-size:12px;letter-spacing:0.400px;color:#fff;line-height:20px;transform-origin:0 0;transform:scaleX(1.0156);left:1887.50px;top:1011.34px;">2</div>
</body></html>
